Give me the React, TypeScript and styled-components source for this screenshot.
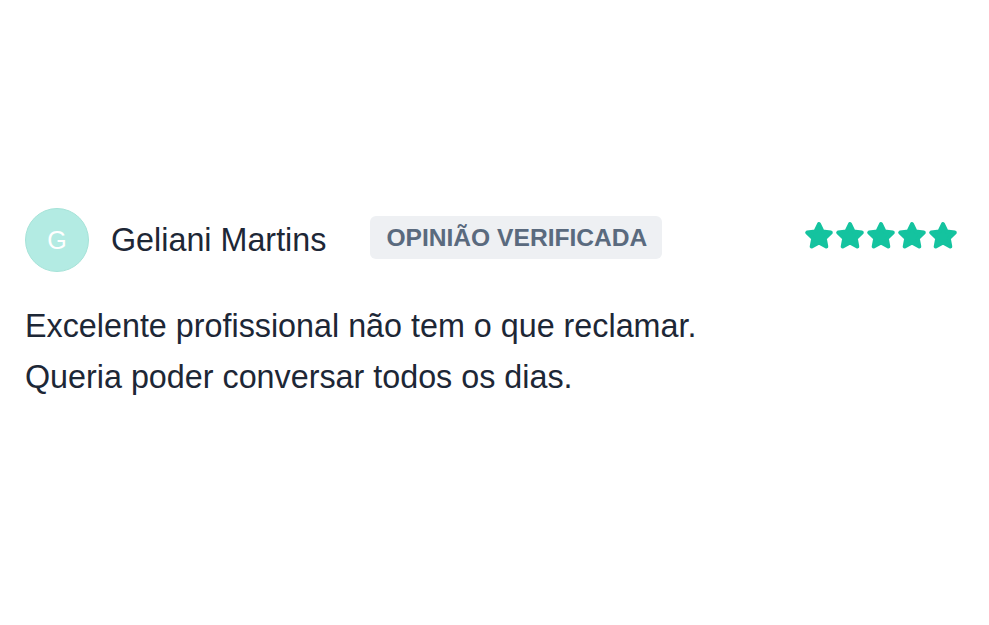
import React from "react";
import styled, { createGlobalStyle } from "styled-components";

const Global = createGlobalStyle`
  html, body { margin: 0; padding: 0; background: #ffffff; }
  body { font-family: "Liberation Sans", Arial, sans-serif; }
`;

const Page = styled.div`
  width: 989px;
  height: 625px;
  box-sizing: border-box;
  padding: 208px 31px 0 25px;
`;

const Header = styled.div`
  display: flex;
  align-items: center;
  height: 64px;
`;

const Avatar = styled.div`
  width: 64px;
  height: 64px;
  border-radius: 50%;
  box-sizing: border-box;
  background: #b3ebe3;
  border: 1px solid #a6e3d8;
  color: #ffffff;
  font-size: 25px;
  display: flex;
  align-items: center;
  justify-content: center;
  flex-shrink: 0;
`;

const Name = styled.div`
  margin-left: 22px;
  font-size: 32.3px;
  color: #1d2736;
  line-height: 1;
`;

const Badge = styled.div`
  margin-left: 44px;
  margin-top: -5px;
  background: #eef0f3;
  border-radius: 6px;
  padding: 8px 15px 8px 16px;
  font-size: 24.6px;
  line-height: 27px;
  font-weight: 700;
  color: #5a6a7e;
`;

const Stars = styled.div`
  margin-left: auto;
  margin-top: -9px;
  display: flex;
  gap: 1px;
`;

const Body = styled.p`
  margin: 29px 0 0;
  font-size: 32.3px;
  line-height: 51px;
  color: #1d2736;
`;

const Star = () => (
  <svg width="30" height="29" viewBox="0 0 30 29">
    <polygon
      points="15,3 18.6,10.6 26.8,11.6 20.8,17.3 22.3,25.5 15,21.5 7.7,25.5 9.2,17.3 3.2,11.6 11.4,10.6"
      fill="#14c39f"
      stroke="#14c39f"
      strokeWidth="4"
      strokeLinejoin="round"
    />
  </svg>
);

export default function App() {
  return (
    <>
      <Global />
      <Page>
        <Header>
          <Avatar>G</Avatar>
          <Name>Geliani Martins</Name>
          <Badge>OPINIÃO VERIFICADA</Badge>
          <Stars>
            {[0, 1, 2, 3, 4].map((i) => (
              <Star key={i} />
            ))}
          </Stars>
        </Header>
        <Body>
          Excelente profissional não tem o que reclamar.
          <br />
          Queria poder conversar todos os dias.
        </Body>
      </Page>
    </>
  );
}
